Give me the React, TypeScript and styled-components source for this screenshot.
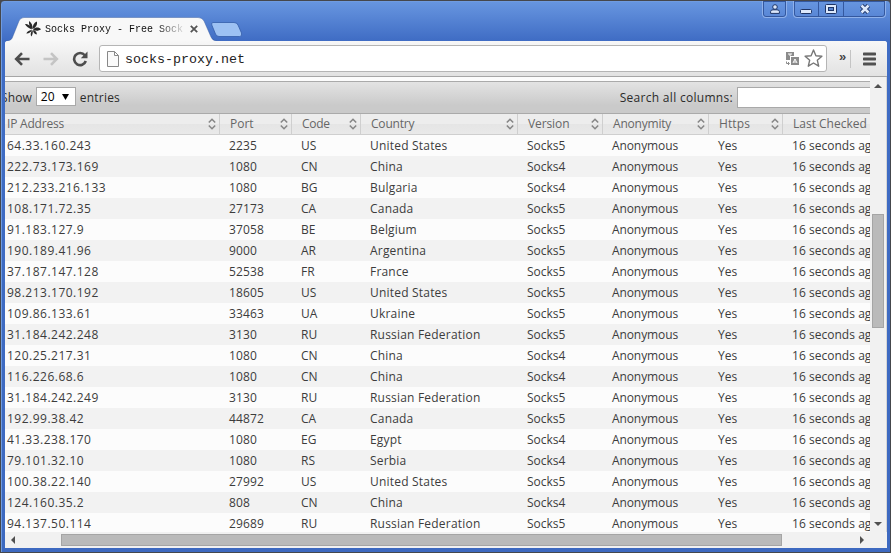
import React from 'react';
import styled, { createGlobalStyle } from 'styled-components';

const GlobalStyle = createGlobalStyle`
  * { box-sizing: border-box; }
  html, body { margin: 0; padding: 0; overflow: hidden; background: #4a4a4e; }
  svg { display: block; flex: none; }
`;

const Window = styled.div`
  width: 891px;
  height: 553px;
  padding: 0 4px 4px;
  display: flex;
  flex-direction: column;
  overflow: hidden;
  border: 1px solid #45474c;
  border-radius: 4px 4px 0 0;
  background: linear-gradient(#6796e0 0, #5c8ad8 12px, #3f6cc4 40px, #3d69c0 100%);
  box-shadow: inset 1px 1px 0 #6f9be0;
  font-family: 'Open Sans', 'Noto Sans', sans-serif;
  font-size: 12px;
  color: #3c3c3c;
`;

const TitleBar = styled.div`
  height: 40px;
  flex: none;
  display: flex;
  justify-content: space-between;
`;

const TabStrip = styled.div`
  display: flex;
  padding-top: 16px;
`;

const Tab = styled.div`
  position: relative;
  width: 212px;
  height: 24px;
  display: flex;
  align-items: center;
  padding-left: 20px;
`;

const TabShape = styled.svg`
  position: absolute;
  left: 0;
  top: 0;
`;

const TabTitle = styled.span`
  position: relative;
  width: 138px;
  margin: 2px 7px 0 4px;
  overflow: hidden;
  white-space: pre;
  font: 10px/16px 'Liberation Mono', monospace;
  color: #111;
  mask-image: linear-gradient(90deg, #000 112px, transparent 142px);
`;

const Favicon = styled.svg`
  position: relative;
`;

const NewTab = styled.svg`
  margin: 4px 0 0 -7px;
`;

const CaptionButtons = styled.div`
  display: flex;
  align-items: flex-start;
  gap: 6px;
`;

const CaptionGroup = styled.div`
  height: 17px;
  display: flex;
  border: 1px solid #8fb1ea;
  border-top: 0;
  border-radius: 0 0 4px 4px;
  box-shadow: inset 0 0 0 1px #34589f;
  overflow: hidden;
`;

const CaptionButton = styled.div<{ $w: number; $divider?: boolean; $low?: boolean }>`
  width: ${p => p.$w}px;
  height: 16px;
  display: flex;
  align-items: center;
  justify-content: center;
  padding-top: ${p => (p.$low ? 5 : 0)}px;
  border-right: ${p => (p.$divider ? '1px solid #34589f' : '0')};
`;

const Chrome = styled.div`
  width: 882px;
  flex: 1;
  min-height: 0;
  display: flex;
  flex-direction: column;
  background: #fff;
  border-radius: 3px 3px 0 0;
  overflow: hidden;
`;

const Toolbar = styled.div`
  height: 36px;
  flex: none;
  display: flex;
  align-items: center;
  background: linear-gradient(#f7f7f7, #e2e2e2);
  border-bottom: 1px solid #a6a6a6;
  padding: 0 7px 0 9px;
`;

const NavButtons = styled.div`
  display: flex;
  gap: 13px;
  width: 85px;
  flex: none;
`;

const AddressBar = styled.div`
  width: 728px;
  height: 27px;
  flex: none;
  display: flex;
  align-items: center;
  padding: 0 3px 0 6px;
  background: #fff;
  border: 1px solid #b5b5b5;
  border-radius: 3px;
`;

const Url = styled.span`
  flex: 1;
  padding: 2px 0 0 6px;
  font: 13.33px/20px 'Liberation Mono', monospace;
  color: #222;
`;

const More = styled.span`
  width: 23px;
  flex: none;
  padding: 0 0 3px 12px;
  font: bold 13px/20px 'Liberation Sans', sans-serif;
  color: #444;
`;

const Divider = styled.span`
  width: 1px;
  height: 18px;
  flex: none;
  margin: 0 12px 0 0;
  background: #c4c4c4;
`;

const Viewport = styled.div`
  flex: 1;
  min-height: 0;
  display: grid;
  grid-template-columns: 865px 17px;
  grid-template-rows: 455px 17px;
  background: #f1f1f1;
`;

const Page = styled.div`
  overflow: hidden;
  padding-top: 4px;
  background: #fcfcfc;
`;

const ControlBar = styled.div`
  height: 33px;
  display: flex;
  align-items: center;
  border-top: 1px solid #aaa;
  border-bottom: 1px solid #aaa;
  background: linear-gradient(#e3e3e3, #cacaca 75%, #cacaca);
  color: #2b2b2b;
  white-space: nowrap;
`;

const Label = styled.span<{ $shift?: number; $ls?: number }>`
  margin-left: ${p => p.$shift ?? 0}px;
  letter-spacing: ${p => p.$ls ?? 0}px;
`;

const Select = styled.div`
  width: 40px;
  height: 19px;
  margin: -2px 4px 0;
  padding: 0 6px 0 4px;
  display: flex;
  align-items: center;
  justify-content: space-between;
  border: 1px solid #a9a9a9;
  background: #fff;
  color: #000;
`;

const SearchArea = styled.div`
  margin-left: auto;
  display: flex;
  align-items: center;
  gap: 4px;
`;

const SearchInput = styled.div`
  width: 133px;
  height: 21px;
  border: 1px solid #a9a9a9;
  border-right: 0;
  background: #fff;
`;

const columns = '215px 72px 69px 157px 85px 106px 74px 110px';

const HeaderRow = styled.div`
  display: grid;
  grid-template-columns: ${columns};
  height: 21px;
  border-bottom: 1px solid #cfcfcf;
  background: linear-gradient(#ededed 50%, #e5e5e5 50%, #e9e9e9);
  color: #666;
`;

const HeaderCell = styled.div<{ $first?: boolean; $ls: number }>`
  display: flex;
  justify-content: space-between;
  align-items: center;
  padding: 0 3px 0 ${p => (p.$first ? 2 : 10)}px;
  border-right: 1px solid #cfcfcf;
  line-height: 20px;
  letter-spacing: ${p => p.$ls}px;
  white-space: nowrap;
`;

const Row = styled.div`
  display: grid;
  grid-template-columns: ${columns};
  height: 21px;
  background: #fcfcfc;
  &:nth-child(even) { background: #f2f2f2; }
`;

const Cell = styled.div<{ $ls: number }>`
  padding-left: 9px;
  line-height: 21px;
  letter-spacing: ${p => p.$ls}px;
  white-space: nowrap;
  &:first-child { padding-left: 2px; }
`;

const VerticalScroll = styled.div`
  display: flex;
  flex-direction: column;
  align-items: center;
  padding: 7px 1px 6px 0;
  border-right: 1px solid #d5d5d5;
`;

const VerticalThumb = styled.div`
  width: 12px;
  height: 114px;
  margin: 126px 0 auto;
  border: 1px solid #a5a5a5;
  background: #bababa;
`;

const HorizontalScroll = styled.div`
  display: flex;
  align-items: center;
  padding: 0 6px 1px;
`;

const HorizontalThumb = styled.div`
  width: 721px;
  height: 12px;
  margin: 0 auto 0 46px;
  border: 1px solid #a5a5a5;
  background: #bababa;
`;

const data: string[][] = [
  ['64.33.160.243', '2235', 'US', 'United States', 'Socks5'],
  ['222.73.173.169', '1080', 'CN', 'China', 'Socks4'],
  ['212.233.216.133', '1080', 'BG', 'Bulgaria', 'Socks4'],
  ['108.171.72.35', '27173', 'CA', 'Canada', 'Socks5'],
  ['91.183.127.9', '37058', 'BE', 'Belgium', 'Socks5'],
  ['190.189.41.96', '9000', 'AR', 'Argentina', 'Socks5'],
  ['37.187.147.128', '52538', 'FR', 'France', 'Socks5'],
  ['98.213.170.192', '18605', 'US', 'United States', 'Socks5'],
  ['109.86.133.61', '33463', 'UA', 'Ukraine', 'Socks5'],
  ['31.184.242.248', '3130', 'RU', 'Russian Federation', 'Socks5'],
  ['120.25.217.31', '1080', 'CN', 'China', 'Socks4'],
  ['116.226.68.6', '1080', 'CN', 'China', 'Socks4'],
  ['31.184.242.249', '3130', 'RU', 'Russian Federation', 'Socks5'],
  ['192.99.38.42', '44872', 'CA', 'Canada', 'Socks5'],
  ['41.33.238.170', '1080', 'EG', 'Egypt', 'Socks4'],
  ['79.101.32.10', '1080', 'RS', 'Serbia', 'Socks4'],
  ['100.38.22.140', '27992', 'US', 'United States', 'Socks5'],
  ['124.160.35.2', '808', 'CN', 'China', 'Socks4'],
  ['94.137.50.114', '29689', 'RU', 'Russian Federation', 'Socks5'],
];

const headers: [string, number][] = [
  ['IP Address', -0.2], ['Port', 0], ['Code', -0.3], ['Country', -0.2],
  ['Version', -0.1], ['Anonymity', -0.2], ['Https', 0.1], ['Last Checked', 0],
];
const spacing = [0.49, 0.13, 0, 0.2, 0, -0.1, 0, 0.03];

const SortIcon = () => (
  <svg width="8" height="12" viewBox="0 0 8 12" fill="none" stroke="#888" strokeWidth="1.6">
    <path d="M0.8 4.5 4 1.3 7.2 4.5M0.8 7.5 4 10.7 7.2 7.5" />
  </svg>
);

const Arrow = ({ d, w, h }: { d: string; w: number; h: number }) => (
  <svg width={w} height={h} viewBox={`0 0 ${w} ${h}`} fill="#505050"><path d={d} /></svg>
);

export default function App() {
  return (
    <>
      <GlobalStyle />
      <Window>
        <TitleBar>
          <TabStrip>
            <Tab>
              <TabShape width="212" height="24" viewBox="0 0 212 24">
                <path d="M0 24C6 24 7 22 8 19L14 4Q15.500.5 19 .5H193Q197 .5 199 4L206 20Q207.500 24 212 24Z" fill="#f8f8f8" />
                <path d="M0 24C6 24 7 22 8 19L14 4Q15.500.5 19 .5H193Q197 .5 199 4L206 20Q207.500 24 212 24" fill="none" stroke="#38589a" strokeOpacity=".6" strokeWidth=".7" />
              </TabShape>
              <Favicon width="16" height="16" viewBox="0 0 16 16" fill="#292929">
                <path d="M7 8.500C4 7.500 1 5.500 0 3 3 3 6 5 7 8.500ZM7.300 8C4.600 6 3.600 3 4 0 6.500 1.500 8 4.500 7.300 8ZM7.500 8C7.600 4.500 9 1.500 12 .5 12.500 4 11 6.800 7.500 8ZM8 8.500C10.500 6 14 6 16 8.300 13.500 10.200 10.500 10.300 8 8.500ZM8 9C11 9.500 12 11.500 11.800 13.500 9.500 13 8 11.500 8 9ZM7.500 9C8.300 11 7.500 14 6.300 15.500 5.200 13.500 5.700 11 7.500 9ZM7 9C6 11.500 3.500 12.800 1.300 12.500 2.300 10.500 4.500 9 7 9Z" />
              </Favicon>
              <TabTitle>Socks Proxy - Free Sock</TabTitle>
              <Favicon width="8" height="8" viewBox="0 0 8 8" stroke="#555" strokeWidth="1.8">
                <path d="m.8.8 6.400 6.400M7.200.8.8 7.200" />
              </Favicon>
            </Tab>
            <NewTab width="34" height="16" viewBox="0 0 34 16">
              <path d="M3 1.500H24Q27 1.500 28 4L31.500 12Q32.500 15.500 29.500 15.500H9Q6.500 15.500 5.500 13L1.800 4Q1 1.500 3 1.500Z" fill="#9dc1f3" stroke="#345da9" strokeWidth=".8" />
            </NewTab>
          </TabStrip>
          <CaptionButtons>
            <CaptionGroup>
              <CaptionButton $w={23}>
                <svg width="10" height="10" viewBox="0 0 10 10" fill="#dce8fb" stroke="#1f3566">
                  <path d="M.6 9.400V7.500Q.6 6 3 5.800H7Q9.400 6 9.400 7.500V9.400Z" /><circle cx="5" cy="3" r="2.300" />
                </svg>
              </CaptionButton>
            </CaptionGroup>
            <CaptionGroup>
              <CaptionButton $w={25} $divider $low>
                <svg width="12" height="5" viewBox="0 0 12 5"><rect x=".5" y=".5" width="11" height="4" rx="1" fill="#dce8fb" stroke="#1f3566" /></svg>
              </CaptionButton>
              <CaptionButton $w={25} $divider>
                <svg width="12" height="10" viewBox="0 0 12 10" fill="#dce8fb" stroke="#1f3566"><rect x=".5" y=".5" width="11" height="9" rx="1" /><rect x="3.500" y="3.500" width="5" height="3" fill="#5783cf" /></svg>
              </CaptionButton>
              <CaptionButton $w={41}>
                <svg width="12" height="10" viewBox="0 0 12 10"><path d="M2.500 1.500 9.500 8.500M9.500 1.500 2.500 8.500" stroke="#1f3566" strokeWidth="4.500" /><path d="M2.500 1.500 9.500 8.500M9.500 1.500 2.500 8.500" stroke="#dce8fb" strokeWidth="2.500" /></svg>
              </CaptionButton>
            </CaptionGroup>
          </CaptionButtons>
        </TitleBar>
        <Chrome>
          <Toolbar>
            <NavButtons>
              <svg width="16" height="16" viewBox="0 0 16 16" fill="none" stroke="#4d4d4d" strokeWidth="2.600"><path d="M15.500 8H2.500M8 2.200 2.200 8 8 13.800" /></svg>
              <svg width="16" height="16" viewBox="0 0 16 16" fill="none" stroke="#c4c4c4" strokeWidth="2.600"><path d="M.5 8h13M8 2.200 13.800 8 8 13.800" /></svg>
              <svg width="16" height="16" viewBox="0 0 16 16" fill="none" stroke="#4d4d4d" strokeWidth="2.600"><path d="M12.800 4.300A6 6 0 1 0 13.800 10" /><path d="M15.500.5V7.200H8.800Z" fill="#4d4d4d" stroke="none" /></svg>
            </NavButtons>
            <AddressBar>
              <svg width="13" height="16" viewBox="0 0 13 16" fill="#fafafa" stroke="#888"><path d="M1.500.5H8.500L12.500 4.500V15.500H1.500ZM8.500.5V4.500H12.500" /></svg>
              <Url>socks-proxy.net</Url>
              <svg width="15" height="15" viewBox="0 0 15 15">
                <path d="M1 1H9V5H5V9H1ZM6 6H14V14H6Z" fill="#8b8b8b" />
                <path d="M3 3H7M5 3V5M8 12 10 8 12 12M9 11H11" fill="none" stroke="#fff" />
                <path d="M1.500 10.500V12.500H4M3 11 4.500 12.500 3 14" fill="none" stroke="#8b8b8b" />
              </svg>
              <svg width="23" height="19" viewBox="0 0 23 19" fill="#fff" stroke="#777" strokeWidth="1.400" strokeLinejoin="round"><path d="m13.500 1 2.400 5.700 6 .5-4.600 4 1.400 6-5.200-3.200-5.200 3.200 1.400-6-4.600-4 6-.5Z" /></svg>
            </AddressBar>
            <More>»</More>
            <Divider />
            <svg width="13" height="14" viewBox="0 0 13 14" fill="#505050"><rect y="0.500" width="13" height="3" rx=".7" /><rect y="5.500" width="13" height="3" rx=".7" /><rect y="10.500" width="13" height="3" rx=".7" /></svg>
          </Toolbar>
          <Viewport>
            <Page>
              <ControlBar>
                <Label $shift={-4} $ls={0.1}>Show</Label>
                <Select>20<svg width="7" height="6" viewBox="0 0 7 6"><path d="M0 0H7L3.500 6Z" /></svg></Select>
                <Label $ls={0.2}>entries</Label>
                <SearchArea>
                  <Label $ls={0.3}>Search all columns:</Label>
                  <SearchInput />
                </SearchArea>
              </ControlBar>
              <HeaderRow>
                {headers.map(([name, ls], i) => (
                  <HeaderCell key={name} $first={i === 0} $ls={ls}>{name}{i < 7 && <SortIcon />}</HeaderCell>
                ))}
              </HeaderRow>
              {data.map(row => (
                <Row key={row[0]}>
                  {[...row, 'Anonymous', 'Yes', '16 seconds ago'].map((text, i) => (
                    <Cell key={i} $ls={spacing[i]}>{text}</Cell>
                  ))}
                </Row>
              ))}
            </Page>
            <VerticalScroll>
              <Arrow w={8} h={4} d="M0 4 4 0 8 4Z" />
              <VerticalThumb />
              <Arrow w={8} h={4} d="M0 0H8L4 4Z" />
            </VerticalScroll>
            <HorizontalScroll>
              <Arrow w={4} h={8} d="M4 0V8L0 4Z" />
              <HorizontalThumb />
              <Arrow w={4} h={8} d="M0 0 4 4 0 8Z" />
            </HorizontalScroll>
          </Viewport>
        </Chrome>
      </Window>
    </>
  );
}
